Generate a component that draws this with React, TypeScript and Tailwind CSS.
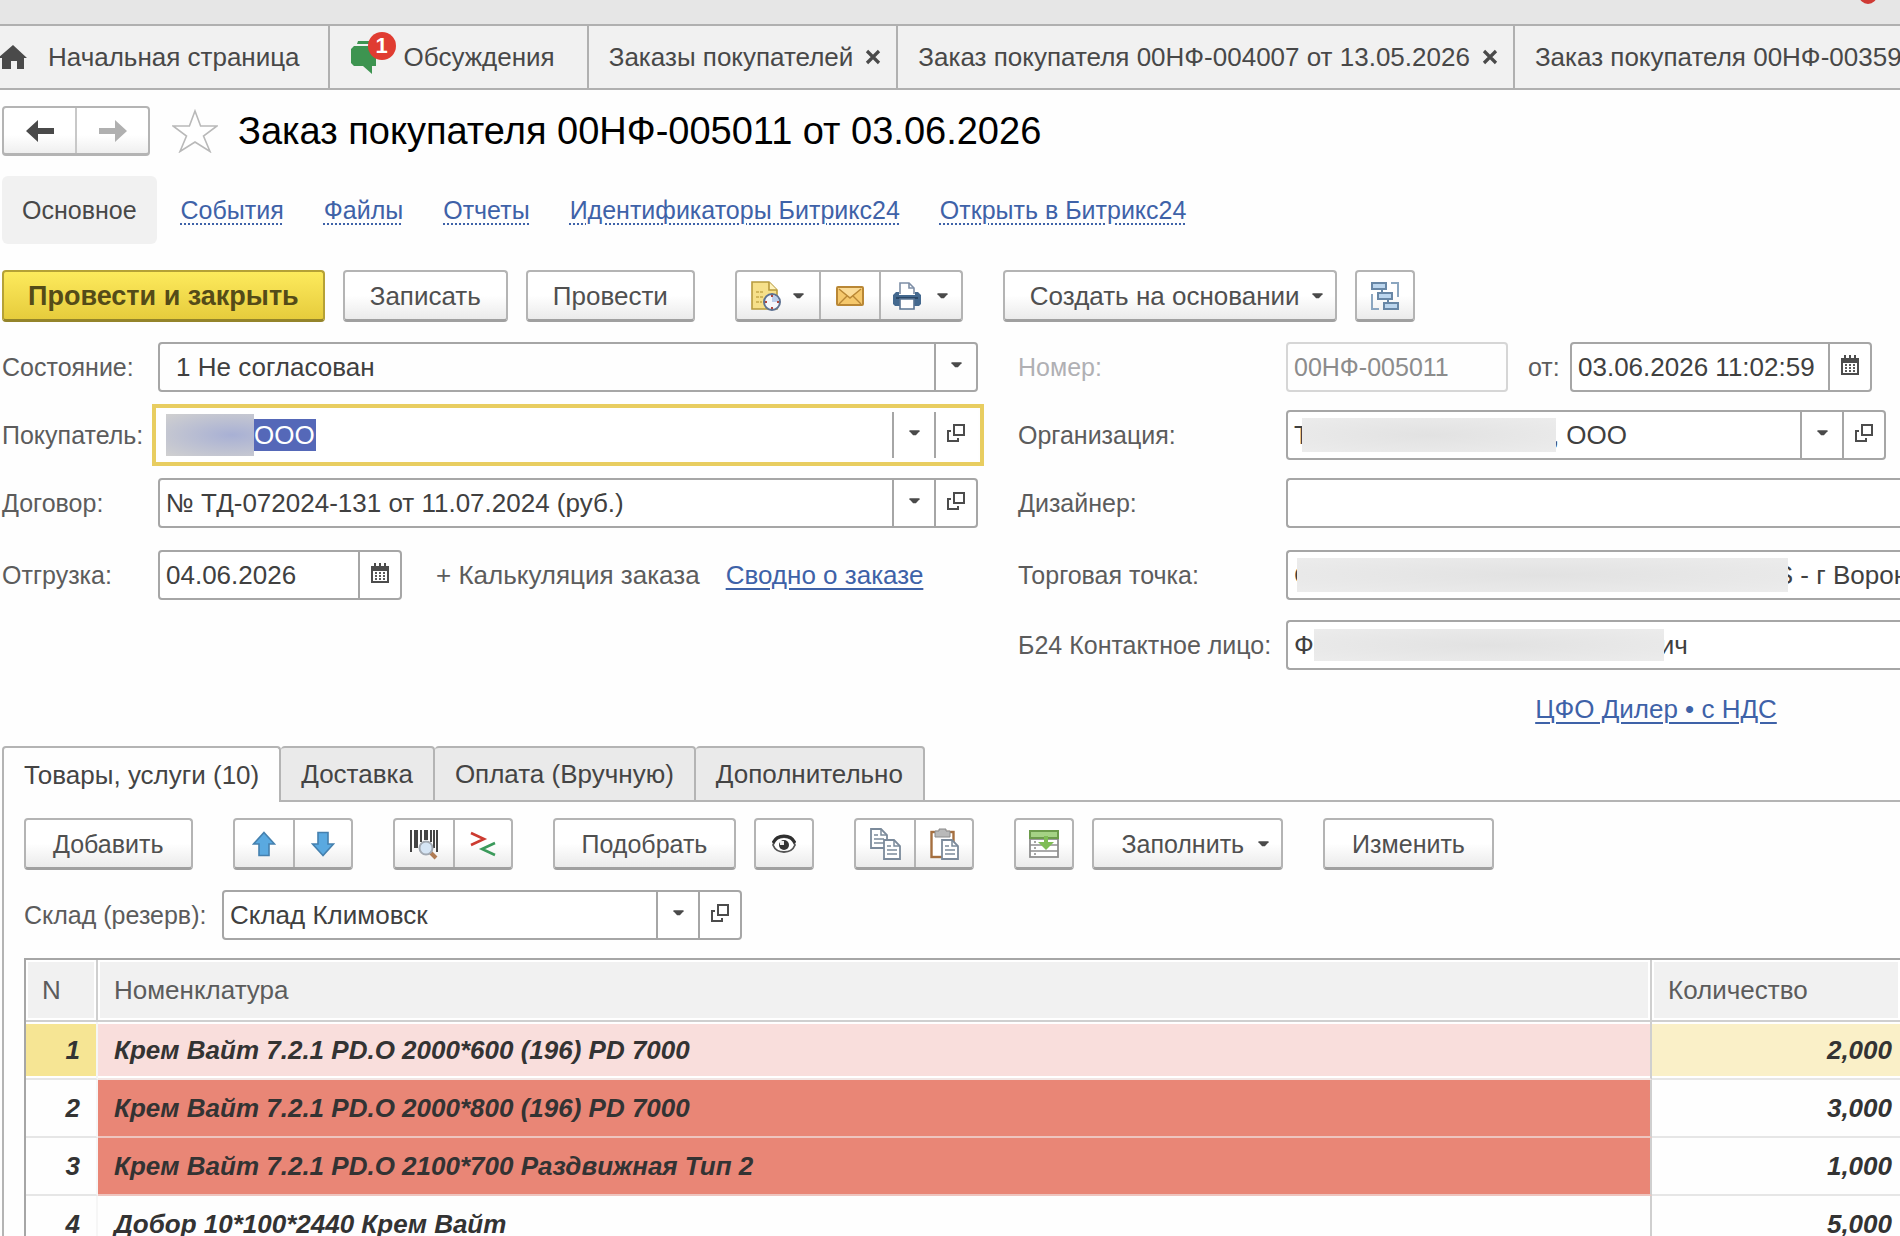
import React from 'react';
import clsx from 'clsx';

const btn =
  'flex h-[52px] items-center justify-center rounded border-2 border-b-[3px] border-[#b4b4b4] border-b-[#a0a0a0] bg-linear-to-b from-white from-50% to-[#ebebeb] text-[#505050]';
const groupBtn = 'flex h-full items-center justify-center gap-3 border-[#b4b4b4]';

const Caret = ({ className }: { className?: string }) => (
  <svg viewBox="0 0 12 6" className={clsx('h-[6px] w-[11px] shrink-0', className)} fill="#4a4a4a">
    <path d="M0.5 0h11v1L7.5 5.500h-3L0.5 1z" />
  </svg>
);

const OpenIcon = () => (
  <svg viewBox="0 0 20 20" className="h-5 w-5" fill="none" stroke="#4c4c4c" strokeWidth="2">
    <rect x="8" y="2" width="10" height="10" />
    <path d="M5 8H2v10h10v-3" />
  </svg>
);

const CalendarIcon = () => (
  <svg viewBox="0 0 20 22" className="h-[22px] w-5">
    <path d="M1 4h3V1h2v3h3V1h2v3h3V1h2v3h3v17H1z" fill="#4c4c4c" />
    <path d="M3 9h14v10H3z" fill="#fff" />
    <path d="M5 10h2v2H5zM9 10h2v2H9zM13 10h2v2h-2zM5 13h2v2H5zM9 13h2v2H9zM13 13h2v2h-2zM5 16h2v2H5zM9 16h2v2H9zM13 16h2v2h-2z" fill="#5a5a5a" />
  </svg>
);

const HomeIcon = () => (
  <svg viewBox="0 0 28 26" className="h-[26px] w-7" fill="#4a4a4a">
    <path d="M13 1 27 14h-3v11h-7v-8h-6v8H2V14h-4z" />
  </svg>
);

const ChatIcon = () => (
  <svg viewBox="0 0 30 34" className="h-[34px] w-[30px]" fill="#3d9450">
    <path d="M8 1h16v3H7z" />
    <path d="M4 6h22v20h-4v8l-9-8H4l-3-3V9z" />
  </svg>
);

const CloseIcon = () => (
  <svg viewBox="0 0 16 16" className="h-4 w-4" stroke="#4a4a4a" strokeWidth="3.2">
    <path d="M2 2l12 12M14 2L2 14" />
  </svg>
);

const Arrow = ({ color, flip }: { color: string; flip?: boolean }) => (
  <svg viewBox="0 0 28 22" className={clsx('h-[22px] w-7', flip && 'rotate-180')} fill={color}>
    <path d="M0 11 12 0v8h16v6H12v8z" />
  </svg>
);

const StarIcon = () => (
  <svg viewBox="0 0 46 44" className="h-11 w-[46px]" fill="#fff" stroke="#b9b9b9" strokeWidth="1.6">
    <path d="M23 2l5.6 15H45L31.5 27l6.5 15.5L23 33 8 42.500 14.500 27 1 17h16.400z" />
  </svg>
);

const NoteClockIcon = () => (
  <svg viewBox="0 0 30 30" className="h-[30px] w-[30px]">
    <path d="M1 1h17l8 8v19H1z" fill="#f6e08a" stroke="#b79a3e" strokeWidth="1.6" />
    <path d="M18 1v8h8" fill="#fff3bd" stroke="#b79a3e" strokeWidth="1.6" />
    <path d="M5 11h8M5 16h7M5 21h6" stroke="#c6a94b" strokeWidth="1.6" strokeDasharray="3 1" />
    <circle cx="21" cy="21" r="8" fill="#f4f7fc" stroke="#5d7292" strokeWidth="2" />
    <path d="M21 21v-7a7 7 0 0 1 7 7z" fill="#b9cdea" />
    <path d="M21 14v2M21 26v2M14 21h2M26 21h2" stroke="#b2483e" strokeWidth="2" />
  </svg>
);

const MailIcon = () => (
  <svg viewBox="0 0 28 20" className="h-5 w-7">
    <rect x="1" y="1" width="26" height="18" rx="1" fill="#f5c86c" stroke="#b98735" strokeWidth="2" />
    <path d="M2 2l12 9L26 2z" fill="#fbdc98" />
    <path d="M3 3l11 9L25 3M3 18l8-8M25 18l-8-8" fill="none" stroke="#b98735" strokeWidth="1.4" />
  </svg>
);

const PrinterIcon = () => (
  <svg viewBox="0 0 28 28" className="h-7 w-7">
    <path d="M7 12V1h9l5 5v6" fill="#fff" stroke="#7d8ea6" strokeWidth="1.600" />
    <path d="M16 1v5h5" fill="none" stroke="#7d8ea6" strokeWidth="1.600" />
    <path d="M3 10h3v3h16v-3h3l3 3v9l-2 2H2l-2-2v-9z" fill="#44698f" />
    <path d="M3 15h22v2H3z" fill="#2a4868" />
    <path d="M7 17h14v10H7z" fill="#fff" stroke="#5b7594" strokeWidth="1.6" />
  </svg>
);

const TreeIcon = () => (
  <svg viewBox="0 0 30 30" className="h-[30px] w-[30px]" fill="#bcd6ee" stroke="#6887a6" strokeWidth="2">
    <path d="M21 2h7v14M9 28H2V13" fill="none" stroke="#8ba6c0" />
    <path d="M12 8v4M18 18v4" fill="none" />
    <rect x="2" y="2" width="14" height="6" />
    <rect x="8" y="12" width="14" height="6" />
    <rect x="14" y="22" width="14" height="6" />
  </svg>
);

const MoveIcon = ({ down }: { down?: boolean }) => (
  <svg viewBox="0 0 24 26" className={clsx('h-[26px] w-6', down && 'rotate-180')}>
    <path d="M12 1.500 22.500 13H17v11.500H7V13H1.500z" fill="#5aa9e0" stroke="#4580ae" strokeWidth="1.600" />
  </svg>
);

const BarcodeIcon = () => (
  <svg viewBox="0 0 30 32" className="h-8 w-[30px]">
    <path d="M1 2h2v22H1zM5 2h4v18H5zM11 2h2v12h-2zM15 2h4v10h-4zM21 2h2v12h-2zM24 2h2v18h-2zM27 2h2v22h-2z" fill="#454545" />
    <path d="M21 24l6 6" stroke="#b07c55" strokeWidth="4" />
    <circle cx="17" cy="20" r="6.500" fill="#d5e5f5" stroke="#a3aab3" strokeWidth="2" />
  </svg>
);

const CompareIcon = () => (
  <svg viewBox="0 0 26 26" className="h-[26px] w-[26px]" fill="none" strokeWidth="2.600">
    <path d="M1 2l13 6L1 14" stroke="#cc3b30" />
    <path d="M25 12l-13 6 13 6" stroke="#3b9a5b" />
  </svg>
);

const EyeIcon = () => (
  <svg viewBox="0 0 24 20" className="h-5 w-6">
    <path d="M1 11C3 5 7 3 12 3s9 2 11 8c-2 5-6 7-11 7S3 16 1 11z" fill="#fff" stroke="#555" strokeWidth="1.800" />
    <path d="M1 9C3 4 7 2 12 2s9 2 11 7" fill="none" stroke="#2f2f2f" strokeWidth="3" />
    <circle cx="12" cy="11" r="5" fill="#333" />
    <path d="M8 7h4v4H8z" fill="#eee" />
  </svg>
);

const Sheet = ({ x, y }: { x: number; y: number }) => (
  <g transform={`translate(${x} ${y})`} stroke="#7b8a9b" fill="none">
    <path d="M1 1h10l6 6v13H1z" fill="#fff" strokeWidth="1.800" />
    <path d="M11 1v6h6M4 7h4M4 11h10M4 15h10" strokeWidth="1.500" />
  </g>
);

const CopyIcon = () => (
  <svg viewBox="0 0 31 32" className="h-8 w-[31px]">
    <Sheet x={0} y={0} />
    <Sheet x={13} y={11} />
  </svg>
);

const PasteIcon = () => (
  <svg viewBox="0 0 29 32" className="h-8 w-[29px]">
    <rect x="1.500" y="4" width="22" height="25" fill="#fff" stroke="#a56f3f" strokeWidth="2.400" />
    <path d="M5 3h4V1h7v2h4v6H5z" fill="#b9b9b9" stroke="#8a8a8a" />
    <Sheet x={11} y={11} />
  </svg>
);

const FillTableIcon = () => (
  <svg viewBox="0 0 30 28" className="h-7 w-[30px]">
    <rect x="1" y="9" width="28" height="18" fill="#fff" stroke="#8f8f8f" strokeWidth="1.800" />
    <path d="M1 15h28M1 21h28M6 11v2M6 17v2M6 23v2" stroke="#8f8f8f" strokeWidth="1.600" />
    <rect x="1" y="1" width="28" height="7" fill="#a5d285" stroke="#6c9b4b" strokeWidth="2" />
    <path d="M15 6h4v6h6l-8 8-8-8h6z" fill="#7fbd55" />
  </svg>
);

interface FieldProps {
  id: string;
  value?: string;
  prefix?: React.ReactNode;
  buttons?: ('list' | 'open' | 'calendar')[];
  active?: boolean;
  cut?: boolean;
  className?: string;
  inputClass?: string;
}

const buttonNames = { list: 'Выбрать из списка', open: 'Открыть', calendar: 'Выбрать дату' };

const Field = ({ id, value = '', prefix, buttons = [], active, cut, className, inputClass = 'flex-1 text-[#404040]' }: FieldProps) => (
  <div
    className={clsx(
      'flex h-[50px] min-w-0 items-center border-2 bg-white',
      active ? 'border-transparent outline-4 outline-offset-2 outline-[#e8cd60]' : 'border-[#a6a6a6]',
      cut ? 'rounded-l border-r-0' : !active && 'rounded',
      className,
    )}
  >
    <div className="flex h-full min-w-0 flex-1 items-center overflow-hidden pl-[6px]">
      {prefix}
      <input id={id} defaultValue={value} className={clsx('min-w-0 outline-none', inputClass)} />
    </div>
    {buttons.map(b => (
      <button
        key={b}
        aria-label={buttonNames[b]}
        className="flex h-full w-[42px] shrink-0 items-center justify-center border-l-2 border-[#a6a6a6] pb-1"
      >
        {b === 'list' && <Caret />}
        {b === 'open' && <OpenIcon />}
        {b === 'calendar' && <CalendarIcon />}
      </button>
    ))}
  </div>
);

const Label = ({ id, children, className = 'text-[#5c5c5c]' }: { id: string; children: React.ReactNode; className?: string }) => (
  <label htmlFor={id} className={clsx('shrink-0 text-[25px] whitespace-nowrap', className)}>
    {children}
  </label>
);

// Hidden part of a value, lies over the letters next to it
const Smudge = ({ className }: { className: string }) => (
  <span className={clsx('relative z-10 shrink-0 bg-radial from-[#e2e2e2] to-[#ececec]', className)} />
);

const windows = ['Заказы покупателей', 'Заказ покупателя 00НФ-004007 от 13.05.2026'];
const sections = ['События', 'Файлы', 'Отчеты', 'Идентификаторы Битрикс24', 'Открыть в Битрикс24'];
const pages = ['Доставка', 'Оплата (Вручную)', 'Дополнительно'];

const rows = [
  { n: 1, name: 'Крем Вайт 7.2.1 PD.O 2000*600 (196) PD 7000', qty: '2,000', state: 'current' },
  { n: 2, name: 'Крем Вайт 7.2.1 PD.O 2000*800 (196) PD 7000', qty: '3,000', state: 'alert' },
  { n: 3, name: 'Крем Вайт 7.2.1 PD.O 2100*700 Раздвижная Тип 2', qty: '1,000', state: 'alert' },
  { n: 4, name: 'Добор 10*100*2440 Крем Вайт', qty: '5,000', state: '' },
];

const WindowTabs = () => (
  <nav className="flex h-[66px] shrink-0 overflow-hidden border-y-2 border-[#b0b0b0] bg-[#f1f1f1] whitespace-nowrap text-[#484848]">
    <button className="flex shrink-0 items-center gap-5 border-r-2 border-[#b0b0b0] pr-7">
      <HomeIcon />
      Начальная страница
    </button>
    <button className="flex shrink-0 items-center border-r-2 border-[#b0b0b0] pr-8 pl-5">
      <span className="relative mr-6">
        <ChatIcon />
        <span className="absolute -top-2 left-[18px] flex h-7 w-7 items-center justify-center rounded-full bg-[#e03c31] text-[22px] leading-7 font-bold text-white">
          1
        </span>
      </span>
      Обсуждения
    </button>
    {windows.map(w => (
      <div key={w} className="flex shrink-0 items-center gap-3 border-r-2 border-[#b0b0b0] pr-[15px] pl-5">
        <button>{w}</button>
        <button aria-label="Закрыть">
          <CloseIcon />
        </button>
      </div>
    ))}
    <button className="shrink-0 pl-5">Заказ покупателя 00НФ-003594</button>
  </nav>
);

const OrderFields = () => (
  <div className="mt-5 grid grid-cols-[976fr_882fr] gap-10">
    <div className="flex min-w-0 flex-col">
      <div className="flex items-center">
        <Label id="state" className="w-[156px] text-[#5c5c5c]">Состояние:</Label>
        <div className="relative flex h-[50px] flex-1 rounded border-2 border-[#a6a6a6]">
          <select id="state" className="flex-1 appearance-none pl-4 text-[#404040] outline-none">
            <option>1 Не согласован</option>
          </select>
          <span className="pointer-events-none absolute inset-y-0 right-0 flex w-[42px] items-center justify-center border-l-2 border-[#a6a6a6] pb-1">
            <Caret />
          </span>
        </div>
      </div>
      <div className="mt-[18px] flex items-center">
        <Label id="customer" className="w-[156px] text-[#5c5c5c]">Покупатель:</Label>
        <Field
          id="customer"
          value="ООО"
          active
          className="flex-1"
          buttons={['list', 'open']}
          prefix={<span className="h-[42px] w-[88px] shrink-0 bg-radial-[at_75%_50%] from-[#a8b0d4] to-[#d0d0d0]" />}
          inputClass="h-8 w-[62px] bg-[#5568b8] text-white"
        />
      </div>
      <div className="mt-[18px] flex items-center">
        <Label id="contract" className="w-[156px] text-[#5c5c5c]">Договор:</Label>
        <Field id="contract" value="№ ТД-072024-131 от 11.07.2024 (руб.)" className="flex-1" buttons={['list', 'open']} />
      </div>
      <div className="mt-[22px] flex items-center whitespace-nowrap">
        <Label id="shipment" className="w-[156px] text-[#5c5c5c]">Отгрузка:</Label>
        <Field id="shipment" value="04.06.2026" className="w-[244px]" buttons={['calendar']} />
        <button className="ml-[34px] text-[#5c5c5c]">+ Калькуляция заказа</button>
        <a href="#summary" className="ml-[26px] text-[#3e62a8] underline decoration-2 underline-offset-4">
          Сводно о заказе
        </a>
      </div>
    </div>

    <div className="flex min-w-0 flex-col">
      <div className="flex items-center">
        <Label id="number" className="w-[268px] text-[#b0b0b4]">Номер:</Label>
        <div className="flex h-[50px] w-[222px] rounded border-2 border-[#d6d6d6] pl-[6px]">
          <input id="number" readOnly defaultValue="00НФ-005011" className="w-full min-w-0 text-[25px] text-[#8c8c8c] outline-none" />
        </div>
        <Label id="date" className="w-[62px] pl-5 text-[#5c5c5c]">от:</Label>
        <Field id="date" value="03.06.2026 11:02:59" className="w-[302px]" buttons={['calendar']} />
      </div>
      <div className="mt-[18px] flex items-center">
        <Label id="company" className="w-[268px] text-[#5c5c5c]">Организация:</Label>
        <Field
          id="company"
          value=", ООО"
          className="mr-[14px] flex-1"
          buttons={['list', 'open']}
          prefix={
            <>
              <span className="shrink-0 text-[#404040]">Т</span>
              <Smudge className="-mr-1 -ml-2 h-[34px] w-[254px]" />
            </>
          }
        />
      </div>
      <div className="mt-[18px] flex items-center">
        <Label id="designer" className="w-[268px] text-[#5c5c5c]">Дизайнер:</Label>
        <Field id="designer" cut className="flex-1" />
      </div>
      <div className="mt-[22px] flex items-center">
        <Label id="outlet" className="w-[268px] text-[#5c5c5c]">Торговая точка:</Label>
        <Field
          id="outlet"
          value="S - г Воронеж"
          cut
          className="flex-1"
          prefix={
            <>
              <span className="shrink-0 text-[#404040]">С</span>
              <Smudge className="-mr-3 -ml-4 h-[34px] w-[491px]" />
            </>
          }
        />
      </div>
      <div className="mt-5 flex items-center">
        <Label id="contact" className="w-[268px] text-[#5c5c5c]">Б24 Контактное лицо:</Label>
        <Field
          id="contact"
          value="ич"
          cut
          className="flex-1"
          prefix={
            <>
              <span className="shrink-0 text-[#404040]">Ф</span>
              <Smudge className="-mr-1 h-8 w-[350px]" />
            </>
          }
        />
      </div>
      <a href="#terms" className="mt-[23px] self-center pl-[394px] text-[#3e62a8]">
        <span className="underline decoration-2 underline-offset-4">ЦФО Дилер • с НДС</span>
      </a>
    </div>
  </div>
);

const th = 'border-b-2 border-[#cfcfcf] bg-[#f1f1f1] font-normal inset-shadow-[0_0_0_2px_#fff]';
const currentCell = 'shadow-[inset_0_2px_#fff,inset_0_-2px_#fff]';

const ItemsTable = () => (
  <table className="mt-[18px] w-full table-fixed border-separate border-spacing-0 border-t-2 border-l-2 border-[#a6a6a6]">
    <colgroup>
      <col className="w-[72px]" />
      <col />
      <col className="w-[248px]" />
    </colgroup>
    <thead>
      <tr className="h-[62px] text-left text-[#5c5c5c]">
        <th className={clsx(th, 'border-r-2 pl-4')}>N</th>
        <th className={clsx(th, 'border-r-2 pl-4')}>Номенклатура</th>
        <th className={clsx(th, 'pl-4')}>Количество</th>
      </tr>
    </thead>
    <tbody className="font-bold text-[#333] italic">
      {rows.map(r => {
        const current = r.state === 'current';
        return (
          <tr key={r.n} className="h-[58px]">
            <td className={clsx('border-r-2 border-b-2 border-r-[#f6f6f6] border-b-[#e6e6e6] pr-4 text-right', current && 'bg-[#f6e594]', current && currentCell)}>
              {r.n}
            </td>
            <td
              className={clsx(
                'border-r-2 border-b-2 border-r-[#cfcfcf] pl-4',
                current && 'border-b-[#f3e6e4] bg-[#f9dedc]',
                current && currentCell,
                r.state === 'alert' && 'border-b-[#eec5bf] bg-[#e98676]',
                !r.state && 'border-b-[#e6e6e6]',
              )}
            >
              {r.name}
            </td>
            <td className={clsx('border-b-2 border-b-[#e6e6e6] pr-2 text-right', current && 'bg-[#faf0c8]', current && currentCell)}>
              {r.qty}
            </td>
          </tr>
        );
      })}
    </tbody>
  </table>
);

export default function App() {
  return (
    <div className="flex h-screen flex-col overflow-hidden bg-[#fefefe] font-['Liberation_Sans',Arial,sans-serif] text-[26px] leading-8">
      <div className="relative h-6 shrink-0 bg-[#e6e6e6]">
        <span className="absolute -top-[14px] right-[23px] h-[18px] w-[18px] rounded-full bg-[#cf3a35]" />
      </div>
      <WindowTabs />

      <main className="flex min-h-0 flex-1 flex-col pt-4 pl-[2px]">
        <header className="flex items-center">
          <div className="flex h-[50px] w-[148px] rounded border-2 border-b-[3px] border-[#b4b4b4] bg-linear-to-b from-white from-60% to-[#efefef]">
            <button aria-label="Назад" className="flex flex-1 items-center justify-center border-r-2 border-[#c8c8c8]">
              <Arrow color="#4a4a4a" />
            </button>
            <button aria-label="Вперед" className="flex flex-1 items-center justify-center">
              <Arrow color="#b0b0b0" flip />
            </button>
          </div>
          <button aria-label="Избранное" className="mr-5 ml-[22px]">
            <StarIcon />
          </button>
          <h1 className="text-[38px] whitespace-nowrap text-black">Заказ покупателя 00НФ-005011 от 03.06.2026</h1>
        </header>

        <nav className="mt-5 flex items-center gap-10 text-[25px] whitespace-nowrap">
          <button className="-mr-4 h-[68px] rounded-md bg-[#f1f1f1] px-5 text-[#484848]">Основное</button>
          {sections.map(s => (
            <a key={s} href="#section" className="text-[#3e62a8] underline decoration-dotted decoration-2 underline-offset-4">
              {s}
            </a>
          ))}
        </nav>

        <div className="mt-[26px] flex whitespace-nowrap">
          <button className="h-[52px] rounded border-2 border-b-[3px] border-[#b5a136] border-b-[#94842a] bg-linear-to-b from-[#fdea5c] to-[#e6cc3c] px-6 text-[27px] font-bold text-[#544b18]">
            Провести и закрыть
          </button>
          <button className={clsx(btn, 'ml-[18px] px-[25px]')}>Записать</button>
          <button className={clsx(btn, 'ml-[18px] px-[25px]')}>Провести</button>
          <div className={clsx(btn, 'ml-10')}>
            <button aria-label="Напоминание" className={clsx(groupBtn, 'w-[84px] border-r-2')}>
              <NoteClockIcon />
              <Caret />
            </button>
            <button aria-label="Отправить" className={clsx(groupBtn, 'w-[60px] border-r-2')}>
              <MailIcon />
            </button>
            <button aria-label="Печать" className={clsx(groupBtn, 'w-20')}>
              <PrinterIcon />
              <Caret className="ml-1" />
            </button>
          </div>
          <button className={clsx(btn, 'ml-10 gap-3 pr-3 pl-[25px]')}>
            Создать на основании
            <Caret />
          </button>
          <button aria-label="Структура подчиненности" className={clsx(btn, 'ml-[18px] w-[60px]')}>
            <TreeIcon />
          </button>
        </div>

        <OrderFields />

        <div className="mt-[21px] flex shrink-0 whitespace-nowrap text-[#444]">
          <button className="h-14 rounded-t border-2 border-b-0 border-[#b4b4b4] px-5">Товары, услуги (10)</button>
          {pages.map(p => (
            <button key={p} className="h-14 rounded-t border-2 border-l-0 border-[#b4b4b4] bg-[#eaeaea] px-5">
              {p}
            </button>
          ))}
          <span className="flex-1 border-b-2 border-[#b4b4b4]" />
        </div>

        <section className="min-h-0 flex-1 overflow-hidden border-l-2 border-[#b4b4b4] pt-4 pl-5">
          <div className="flex text-[25px] whitespace-nowrap">
            <button className={clsx(btn, 'px-[27px]')}>Добавить</button>
            <div className={clsx(btn, 'ml-10')}>
              <button aria-label="Вверх" className={clsx(groupBtn, 'w-[60px] border-r-2')}>
                <MoveIcon />
              </button>
              <button aria-label="Вниз" className={clsx(groupBtn, 'w-14')}>
                <MoveIcon down />
              </button>
            </div>
            <div className={clsx(btn, 'ml-10')}>
              <button aria-label="Поиск по штрихкоду" className={clsx(groupBtn, 'w-[60px] border-r-2')}>
                <BarcodeIcon />
              </button>
              <button aria-label="Сравнить" className={clsx(groupBtn, 'w-14')}>
                <CompareIcon />
              </button>
            </div>
            <button className={clsx(btn, 'ml-10 px-[27px]')}>Подобрать</button>
            <button aria-label="Показать" className={clsx(btn, 'ml-[18px] w-[60px]')}>
              <EyeIcon />
            </button>
            <div className={clsx(btn, 'ml-10')}>
              <button aria-label="Копировать" className={clsx(groupBtn, 'w-[60px] border-r-2')}>
                <CopyIcon />
              </button>
              <button aria-label="Вставить" className={clsx(groupBtn, 'w-14')}>
                <PasteIcon />
              </button>
            </div>
            <button aria-label="Загрузить в таблицу" className={clsx(btn, 'ml-10 w-[60px]')}>
              <FillTableIcon />
            </button>
            <button className={clsx(btn, 'ml-[18px] gap-[14px] pr-3 pl-[27px]')}>
              Заполнить
              <Caret />
            </button>
            <button className={clsx(btn, 'ml-10 px-[27px]')}>Изменить</button>
          </div>

          <div className="mt-5 flex items-center">
            <Label id="stock" className="w-[198px] text-[#5c5c5c]">Склад (резерв):</Label>
            <Field id="stock" value="Склад Климовск" className="w-[520px]" buttons={['list', 'open']} />
          </div>

          <ItemsTable />
        </section>
      </main>
    </div>
  );
}
